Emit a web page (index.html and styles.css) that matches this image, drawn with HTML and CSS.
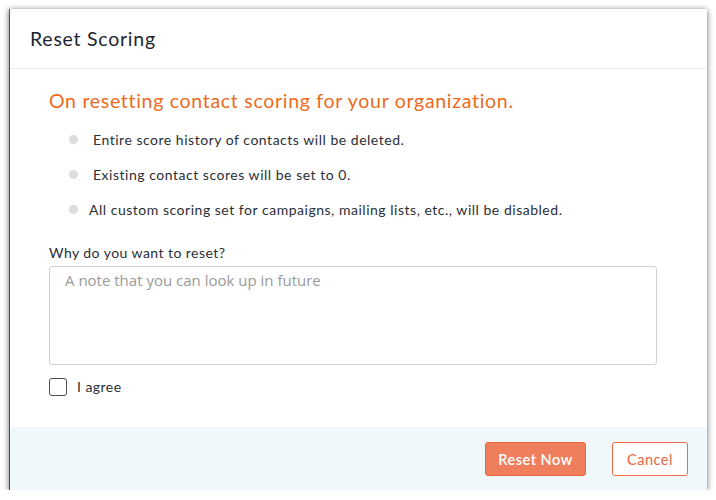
FILE: index.html
```html
<!DOCTYPE html>
<html>
<head>
<meta charset="utf-8">
<link rel="stylesheet" href="styles.css">
</head>
<body>
<div class="dialog">
  <div class="dialog-header">Reset Scoring</div>
  <div class="dialog-body">
    <h2 class="warning">On resetting contact scoring for your organization.</h2>
    <ul class="points">
      <li><span class="dot"></span><span class="pt pt-indent">Entire score history of contacts will be deleted.</span></li>
      <li><span class="dot"></span><span class="pt pt-indent">Existing contact scores will be set to 0.</span></li>
      <li><span class="dot"></span><span class="pt">All custom scoring set for campaigns, mailing lists, etc., will be disabled.</span></li>
    </ul>
    <label class="field-label">Why do you want to reset?</label>
    <div class="note"><span class="placeholder">A note that you can look up in future</span></div>
    <div class="agree"><span class="checkbox"></span><span>I agree</span></div>
  </div>
  <div class="dialog-footer">
    <button class="btn btn-primary">Reset Now</button>
    <button class="btn btn-secondary">Cancel</button>
  </div>
</div>
</body>
</html>
```
FILE: styles.css
```css
* { box-sizing: border-box; }
html, body { margin: 0; padding: 0; background: #fff; }
body {
  font-family: Lato, "Liberation Sans", sans-serif;
  padding: 9px 0 0 9px;
}
.dialog {
  width: 698px;
  height: 481px;
  background: #fff;
  border-left: 1px solid #4a5561;
  box-shadow: 0 1px 6px rgba(0,0,0,0.6);
  display: flex;
  flex-direction: column;
}
.dialog-header {
  height: 60px;
  border-bottom: 1px solid #e9eff4;
  padding-left: 20px;
  display: flex;
  align-items: center;
  font-size: 19.5px;
  letter-spacing: 0.75px;
  color: #1d2530;
}
.dialog-body {
  flex: 1;
  padding: 20px 50px 0 39px;
}
.warning {
  margin: 0;
  font-weight: normal;
  font-size: 19.5px;
  letter-spacing: 0.7px;
  line-height: 24px;
  color: #ee6a1d;
}
.points {
  list-style: none;
  margin: 8.5px 0 0;
  padding: 0;
}
.points li {
  display: flex;
  align-items: center;
  height: 35px;
  font-size: 14px;
  letter-spacing: 0.52px;
  color: #2a2f36;
}
.dot {
  width: 9px;
  height: 9px;
  border-radius: 50%;
  background: #dcdcdc;
  margin-left: 20px;
  margin-right: 11px;
}
.pt-indent { margin-left: 4px; }
.field-label {
  display: block;
  margin-top: 17px;
  font-size: 14px;
  letter-spacing: 0.45px;
  line-height: 18px;
  color: #2a2f36;
}
.note {
  margin-top: 4px;
  height: 99px;
  border: 1px solid #cfd3d7;
  border-radius: 3px;
  padding: 3px 15px;
}
.placeholder {
  font-family: "Open Sans", sans-serif;
  font-size: 15px;
  color: #9a9a9a;
}
.agree {
  display: flex;
  align-items: center;
  margin-top: 13px;
  font-size: 14px;
  letter-spacing: 0.45px;
  color: #2a2f36;
}
.checkbox {
  width: 18px;
  height: 18px;
  border: 1.5px solid #4d4d4d;
  border-radius: 3px;
  margin-right: 10px;
}
.dialog-footer {
  height: 63px;
  background: #f1f8fc;
  display: flex;
  justify-content: flex-end;
  align-items: center;
  gap: 26px;
  padding: 1px 19px 0 0;
}
.btn {
  height: 34px;
  border-radius: 3px;
  font-family: Lato, "Liberation Sans", sans-serif;
  font-size: 14.5px;
  letter-spacing: 0.5px;
  cursor: pointer;
}
.btn-primary {
  width: 101px;
  background: #ef7e5c;
  border: 1px solid #e9663e;
  color: #fff;
  font-weight: 600;
}
.btn-secondary {
  width: 76px;
  background: #fff;
  border: 1px solid #ec6b45;
  color: #e9663e;
}
```
